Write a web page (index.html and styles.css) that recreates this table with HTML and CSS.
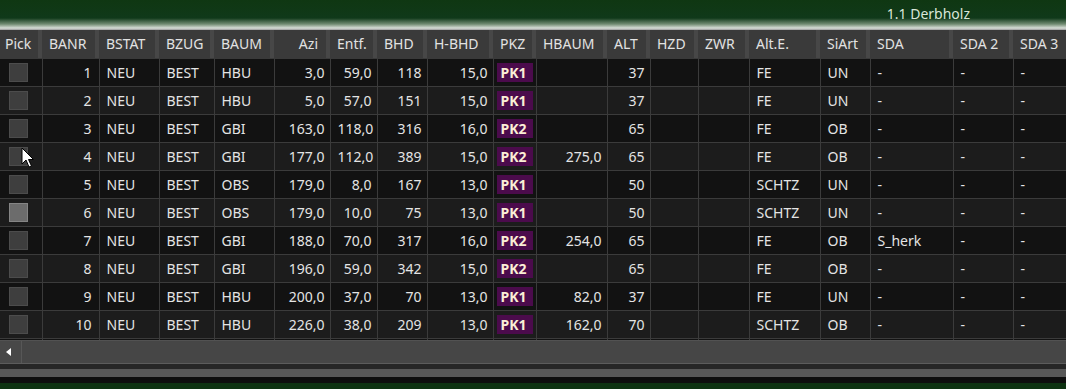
FILE: index.html
```html
<!DOCTYPE html>
<html>
<head>
<meta charset="utf-8">
<link rel="stylesheet" href="styles.css">
</head>
<body>
<div class="app">
  <div class="titlebar"><span class="title">1.1 Derbholz</span></div>
  <div class="grid">
    <table class="data">
      <colgroup>
        <col style="width:42px"><col style="width:57px"><col style="width:60px"><col style="width:55px"><col style="width:60px"><col style="width:56px"><col style="width:47px"><col style="width:50px"><col style="width:66px"><col style="width:43px"><col style="width:71px"><col style="width:43px"><col style="width:48px"><col style="width:51px"><col style="width:71px"><col style="width:50px"><col style="width:83px"><col style="width:60px"><col style="width:60px">
      </colgroup>
      <thead>
        <tr>
          <th class="pickh">Pick</th><th>BANR</th><th>BSTAT</th><th>BZUG</th><th>BAUM</th><th class="r">Azi</th><th>Entf.</th><th>BHD</th><th>H-BHD</th><th>PKZ</th><th>HBAUM</th><th>ALT</th><th>HZD</th><th>ZWR</th><th>Alt.E.</th><th>SiArt</th><th>SDA</th><th>SDA 2</th><th>SDA 3</th>
        </tr>
      </thead>
      <tbody>
        <tr><td class="pick"><span class="cb"></span></td><td class="n nb">1</td><td>NEU</td><td>BEST</td><td>HBU</td><td class="n">3,0</td><td class="n">59,0</td><td class="n">118</td><td class="n">15,0</td><td class="pk"><span class="badge">PK1</span></td><td class="n"></td><td class="n">37</td><td></td><td></td><td>FE</td><td>UN</td><td>-</td><td>-</td><td>-</td></tr>
        <tr><td class="pick"><span class="cb"></span></td><td class="n nb">2</td><td>NEU</td><td>BEST</td><td>HBU</td><td class="n">5,0</td><td class="n">57,0</td><td class="n">151</td><td class="n">15,0</td><td class="pk"><span class="badge">PK1</span></td><td class="n"></td><td class="n">37</td><td></td><td></td><td>FE</td><td>UN</td><td>-</td><td>-</td><td>-</td></tr>
        <tr><td class="pick"><span class="cb"></span></td><td class="n nb">3</td><td>NEU</td><td>BEST</td><td>GBI</td><td class="n">163,0</td><td class="n">118,0</td><td class="n">316</td><td class="n">16,0</td><td class="pk"><span class="badge">PK2</span></td><td class="n"></td><td class="n">65</td><td></td><td></td><td>FE</td><td>OB</td><td>-</td><td>-</td><td>-</td></tr>
        <tr><td class="pick"><span class="cb"></span></td><td class="n nb">4</td><td>NEU</td><td>BEST</td><td>GBI</td><td class="n">177,0</td><td class="n">112,0</td><td class="n">389</td><td class="n">15,0</td><td class="pk"><span class="badge">PK2</span></td><td class="n">275,0</td><td class="n">65</td><td></td><td></td><td>FE</td><td>OB</td><td>-</td><td>-</td><td>-</td></tr>
        <tr><td class="pick"><span class="cb"></span></td><td class="n nb">5</td><td>NEU</td><td>BEST</td><td>OBS</td><td class="n">179,0</td><td class="n">8,0</td><td class="n">167</td><td class="n">13,0</td><td class="pk"><span class="badge">PK1</span></td><td class="n"></td><td class="n">50</td><td></td><td></td><td>SCHTZ</td><td>UN</td><td>-</td><td>-</td><td>-</td></tr>
        <tr><td class="pick"><span class="cb hover"></span></td><td class="n nb">6</td><td>NEU</td><td>BEST</td><td>OBS</td><td class="n">179,0</td><td class="n">10,0</td><td class="n">75</td><td class="n">13,0</td><td class="pk"><span class="badge">PK1</span></td><td class="n"></td><td class="n">50</td><td></td><td></td><td>SCHTZ</td><td>UN</td><td>-</td><td>-</td><td>-</td></tr>
        <tr><td class="pick"><span class="cb"></span></td><td class="n nb">7</td><td>NEU</td><td>BEST</td><td>GBI</td><td class="n">188,0</td><td class="n">70,0</td><td class="n">317</td><td class="n">16,0</td><td class="pk"><span class="badge">PK2</span></td><td class="n">254,0</td><td class="n">65</td><td></td><td></td><td>FE</td><td>OB</td><td>S_herk</td><td>-</td><td>-</td></tr>
        <tr><td class="pick"><span class="cb"></span></td><td class="n nb">8</td><td>NEU</td><td>BEST</td><td>GBI</td><td class="n">196,0</td><td class="n">59,0</td><td class="n">342</td><td class="n">15,0</td><td class="pk"><span class="badge">PK2</span></td><td class="n"></td><td class="n">65</td><td></td><td></td><td>FE</td><td>OB</td><td>-</td><td>-</td><td>-</td></tr>
        <tr><td class="pick"><span class="cb"></span></td><td class="n nb">9</td><td>NEU</td><td>BEST</td><td>HBU</td><td class="n">200,0</td><td class="n">37,0</td><td class="n">70</td><td class="n">13,0</td><td class="pk"><span class="badge">PK1</span></td><td class="n">82,0</td><td class="n">37</td><td></td><td></td><td>FE</td><td>UN</td><td>-</td><td>-</td><td>-</td></tr>
        <tr><td class="pick"><span class="cb"></span></td><td class="n nb">10</td><td>NEU</td><td>BEST</td><td>HBU</td><td class="n">226,0</td><td class="n">38,0</td><td class="n">209</td><td class="n">13,0</td><td class="pk"><span class="badge">PK1</span></td><td class="n">162,0</td><td class="n">70</td><td></td><td></td><td>SCHTZ</td><td>OB</td><td>-</td><td>-</td><td>-</td></tr>
        <tr class="partial"><td></td><td></td><td></td><td></td><td></td><td></td><td></td><td></td><td></td><td></td><td></td><td></td><td></td><td></td><td></td><td></td><td></td><td></td><td></td></tr>
      </tbody>
    </table>
    <svg class="cursor" width="14" height="22" viewBox="0 0 14 22"><path d="M1 1 L1 17 L5 13 L8 20 L10.5 19 L7.5 12.5 L12.5 12.5 Z" fill="#ffffff" stroke="#000000" stroke-width="1" stroke-linejoin="round"/></svg>
  </div>
  <div class="hscroll">
    <div class="arrowbtn"><svg width="6" height="8" viewBox="0 0 6 8"><path d="M5 0 L5 8 L0 4 Z" fill="#ffffff"/></svg></div>
    <div class="track"></div>
  </div>
  <div class="band1"></div>
  <div class="band2"></div>
  <div class="band3"></div>
  <div class="band4"></div>
</div>
</body>
</html>
```
FILE: styles.css
```css
html, body {
  margin: 0;
  padding: 0;
  background: #111111;
}
.app {
  width: 1066px;
  height: 389px;
  overflow: hidden;
  font-family: "Noto Sans", "Open Sans", sans-serif;
  font-size: 14px;
  color: #e4e4e4;
  display: flex;
  flex-direction: column;
}
.titlebar {
  height: 30px;
  flex: none;
  background: linear-gradient(to bottom, #0f3712 0px, #10391a 18px, #6f8a70 24px, #d6ddd6 28px, #9c9c9c 30px);
  display: flex;
  justify-content: flex-end;
  align-items: flex-start;
  padding-right: 96px;
  box-sizing: border-box;
}
.title {
  color: #d9e6d9;
  font-size: 14px;
  line-height: 28px;
  margin-top: 0px;
}
.grid {
  position: relative;
  height: 310px;
  flex: none;
  overflow: hidden;
  background: #111111;
}
.data {
  border-collapse: collapse;
  table-layout: fixed;
  width: 1073px;
}
.data th {
  height: 28px;
  padding: 0 0 0 7px;
  background: #3a3a3a;
  box-shadow: inset -4px 0 0 #474747;
  font-weight: normal;
  text-align: left;
  color: #e2e2e2;
  white-space: nowrap;
  box-sizing: border-box;
  border-bottom: 1px solid #3a3a3a;
}
.data th.pickh {
  padding-left: 5px;
}
.data th.r {
  text-align: right;
  padding-right: 12px;
}
.data td {
  height: 28px;
  box-sizing: border-box;
  border: 1px solid #3b3b3b;
  padding: 0 4px 0 7px;
  white-space: nowrap;
  overflow: hidden;
}
.data td:first-child {
  border-left: none;
}
.data tbody tr:nth-child(odd) td {
  background: #121212;
}
.data tbody tr:nth-child(even) td {
  background: #1c1c1c;
}
.data td.n {
  text-align: right;
  padding-right: 5px;
}
.data td.nb {
  padding-right: 7px;
}
.data td.pick {
  padding: 0 0 0 9px;
}
.data td.pk {
  padding: 0 0 0 3px;
}
.cb {
  display: block;
  width: 19px;
  height: 19px;
  box-sizing: border-box;
  background: #3e3e3e;
  border: 1px solid #4c4c4c;
}
.cb.hover {
  background: #6c6c6c;
  border-color: #858585;
}
.badge {
  display: inline-block;
  width: 36px;
  height: 19px;
  line-height: 19px;
  background: #4b0b4c;
  color: #fbeed6;
  font-weight: bold;
  padding-left: 4px;
  box-sizing: border-box;
  vertical-align: middle;
}
.data tr.partial td {
  height: 4px;
}
.cursor {
  position: absolute;
  left: 21px;
  top: 117px;
}
.hscroll {
  height: 23px;
  flex: none;
  display: flex;
  background: #464646;
  border-top: 1px solid #525252;
  box-sizing: border-box;
}
.arrowbtn {
  width: 22px;
  flex: none;
  display: flex;
  align-items: center;
  justify-content: center;
  border-right: 1px solid #575757;
  padding-right: 4px;
  box-sizing: border-box;
  background: #484848;
}
.track {
  flex: 1;
}
.band1 {
  height: 1px;
  flex: none;
  background: #5c5c5c;
}
.band2 {
  height: 5px;
  flex: none;
  background: #262626;
}
.band3 {
  height: 8px;
  flex: none;
  background: #585858;
}
.band4 {
  flex: 1;
  background: linear-gradient(to bottom, #0e0e0e 0px, #0e0e0e 6px, #0e3312 6px);
}
```
